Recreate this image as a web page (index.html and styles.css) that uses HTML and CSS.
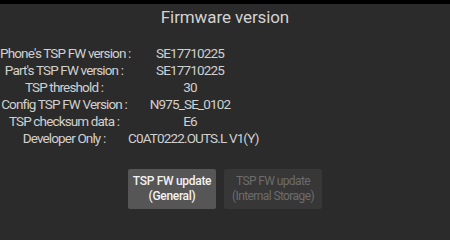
FILE: index.html
```html
<!DOCTYPE html>
<html>
<head>
<meta charset="utf-8">
<link rel="stylesheet" href="styles.css">
</head>
<body>
<div class="statusbar"></div>
<h1 class="title">Firmware version</h1>
<div class="info">
  <div class="label">Phone's TSP FW version :</div><div class="value">SE17710225</div>
  <div class="label">Part's TSP FW version :</div><div class="value">SE17710225</div>
  <div class="label">TSP threshold :</div><div class="value">30</div>
  <div class="label">Config TSP FW Version :</div><div class="value">N975_SE_0102</div>
  <div class="label">TSP checksum data :</div><div class="value">E6</div>
  <div class="label">Developer Only :</div><div class="value">C0AT0222.OUTS.L V1(Y)</div>
</div>
<div class="actions">
  <button class="btn btn-primary">TSP FW update<br>(General)</button>
  <button class="btn btn-disabled">TSP FW update<br>(Internal Storage)</button>
</div>
</body>
</html>
```
FILE: styles.css
```css
html, body {
  margin: 0;
  padding: 0;
  background: #2b2b2b;
  width: 450px;
  height: 231px;
  overflow: hidden;
  font-family: Roboto, "Noto Sans", sans-serif;
}
.statusbar {
  height: 4px;
  background: #000;
}
.title {
  margin: 2px 0 0;
  font-size: 17px;
  font-weight: 400;
  line-height: 22px;
  text-align: center;
  color: #d2d2d2;
  letter-spacing: -0.1px;
}
.info {
  display: grid;
  grid-template-columns: 128px 124px;
  grid-auto-rows: 17px;
  margin-top: 17px;
  font-size: 13.5px;
  line-height: 17px;
  letter-spacing: -0.85px;
  color: #d0d0d0;
}
.label, .value {
  text-align: center;
  white-space: nowrap;
}
.actions {
  display: flex;
  justify-content: center;
  gap: 8px;
  margin-top: 22px;
}
.btn {
  height: 40px;
  border: none;
  border-radius: 2px;
  font-family: Roboto, "Noto Sans", sans-serif;
  font-size: 12px;
  line-height: 15px;
  padding: 0;
}
.btn-primary {
  width: 88px;
  background: #565656;
  color: #f2f2f2;
  font-weight: 500;
  letter-spacing: -0.3px;
}
.btn-disabled {
  width: 98px;
  background: #373737;
  color: #6c6c6c;
  font-weight: 400;
  letter-spacing: -0.6px;
}
```
